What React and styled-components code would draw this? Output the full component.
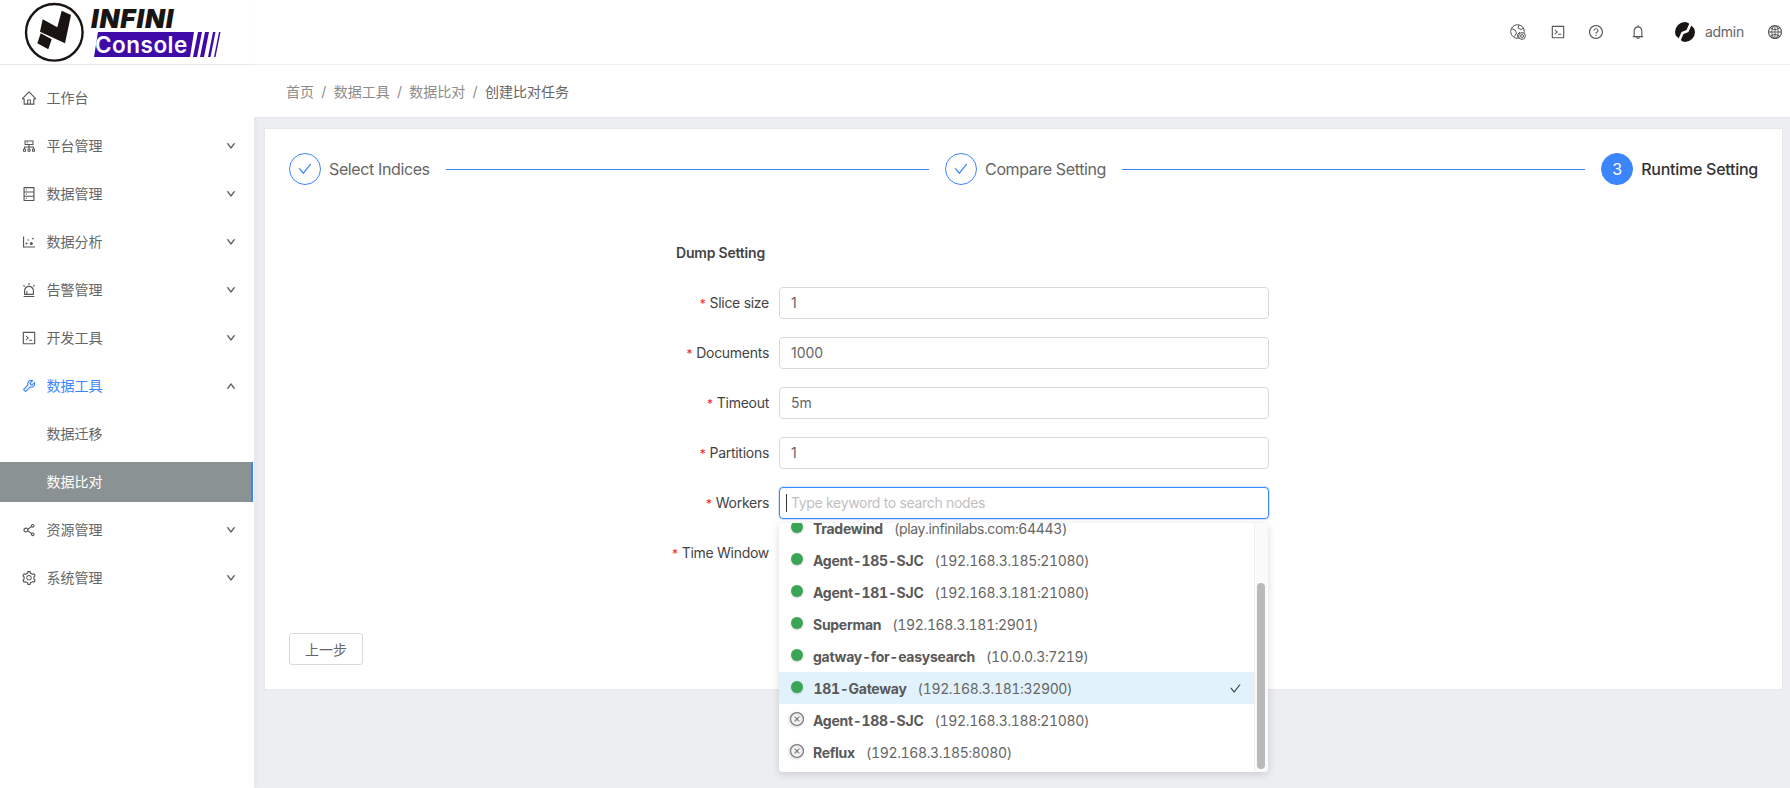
import React from "react";
import styled, { createGlobalStyle } from "styled-components";
import {
  AiOutlineHome, AiOutlineCluster, AiOutlineDatabase, AiOutlineDotChart, AiOutlineAlert,
  AiOutlineCode, AiOutlineTool, AiOutlineShareAlt, AiOutlineSetting, AiOutlineDown, AiOutlineUp,
  AiOutlineQuestionCircle, AiOutlineBell, AiOutlineGlobal, AiOutlineCheck, AiOutlineCloseCircle,
} from "react-icons/ai";

const Global = createGlobalStyle`
  html, body { margin: 0; padding: 0; height: 100%; overflow: hidden; }
  body { font-family: Inter, "Noto Sans CJK SC", sans-serif; font-size: 14px; color: #666; background: #eceef2; }
  * { box-sizing: border-box; }
`;

const Shell = styled.div`display: flex; width: 1790px; height: 788px; background: #eceef2;`;
const Sidebar = styled.aside`width: 254px; flex: none; background: #fff; display: flex; flex-direction: column; box-shadow: 2px 0 6px rgba(0,21,41,.04);`;
const LogoBar = styled.div`height: 65px; flex: none; border-bottom: 1px solid #e8e8e8; padding-left: 24px; display: flex; align-items: flex-start;`;
const Menu = styled.nav`display: flex; flex-direction: column; gap: 8px; padding-top: 13px;`;
const MenuItem = styled.div`
  height: 40px; display: flex; align-items: center; padding: 0 17px 0 21px; position: relative;
  color: ${p => p.$open ? "#3b86ff" : p.$selected ? "#fff" : "#666"};
  background: ${p => p.$selected ? "#8b9293" : "transparent"};
  border-right: ${p => p.$selected ? "2px solid #3b86ff" : "0"};
  margin-right: 1px;
  padding-left: ${p => p.$sub ? "46.5px" : "21px"};
`;
const MenuIcon = styled.span`width: 16px; margin-right: 9.5px; display: flex; font-size: 16px; color: ${p => p.$open ? "#3b86ff" : "#555"};`;
const MenuLabel = styled.span`flex: 1; font-size: 14px; line-height: 22px;`;
const Arrow = styled.span`display: flex; font-size: 10px; svg { color: #555; stroke: #555; stroke-width: 70px; }`;

const Main = styled.div`flex: 1; min-width: 0; display: flex; flex-direction: column;`;
const Header = styled.header`height: 65px; flex: none; background: #fff; border-bottom: 1px solid #f0f0f0; display: flex; align-items: center; justify-content: flex-end; padding-right: 7px; box-shadow: 0 1px 3px rgba(0,21,41,.03);`;
const HeaderIcon = styled.span`display: flex; font-size: 16px; color: #555; margin-left: ${p => p.$gap}px;`;
const Avatar = styled.span`display: flex; margin-left: 29px;`;
const UserName = styled.span`margin-left: 10px; font-size: 14px; color: #666; line-height: 20px; letter-spacing: -.25px;`;
const Crumbs = styled.div`height: 53px; flex: none; background: #fff; border-bottom: 1px solid #e6e8ec; display: flex; align-items: center; padding-left: 32px; font-size: 14px; color: #8c8c8c;`;
const Sep = styled.span`margin: 0 7.3px; color: #8c8c8c;`;
const Current = styled.span`color: #666;`;
const Content = styled.main`padding: 10px 7px 0 10px;`;
const Card = styled.section`height: 562px; background: #fff; border: 1px solid #e8e8e8; padding: 24px 24px 0; display: flex; flex-direction: column;`;
const Steps = styled.div`display: flex; height: 32px;`;
const Step = styled.div`display: flex; align-items: center; flex: ${p => p.$last ? "none" : "1"};`;
const StepDot = styled.span`width: 32px; height: 32px; flex: none; border-radius: 50%; display: flex; align-items: center; justify-content: center; font-size: 16px;
  border: 1px solid #3b86ff; color: ${p => p.$active ? "#fff" : "#3b86ff"}; background: ${p => p.$active ? "#3b86ff" : "#fff"};`;
const StepTitle = styled.span`margin-left: 8px; font-size: 16px; line-height: 24px; letter-spacing: ${p => p.$active ? "-.26px" : "-.38px"}; font-weight: ${p => p.$active ? 500 : 400}; color: ${p => p.$active ? "#333" : "#666"};`;
const StepLine = styled.span`flex: 1; height: 1px; background: #3f84e8; margin: 0 16px;`;

const Form = styled.div`margin: 57px 0 0 377px; display: flex; flex-direction: column;`;
const SectionTitle = styled.div`margin-left: 10px; height: 22px; line-height: 22px; font-weight: 600; font-size: 14px; letter-spacing: -.2px; color: #444; margin-bottom: 23px;`;
const Row = styled.div`display: flex; height: 32px; margin-bottom: 18px; position: relative;`;
const Label = styled.label`width: 103px; flex: none; text-align: right; line-height: 32px; font-size: 14px; letter-spacing: -.28px; color: #444; margin-right: 10px; white-space: nowrap;`;
const Star = styled.span`color: #f5222d; margin-right: 4px; font-size: 12px;`;
const InputBox = styled.div`width: 490px; height: 32px; border: 1px solid ${p => p.$focus ? "#3b86ff" : "#d9d9d9"}; border-radius: 4px; padding: 0 11px; line-height: 30px; font-size: 14px; color: #666; display: flex; align-items: center; background: #fff;
  box-shadow: ${p => p.$focus ? "0 0 0 1px rgba(59,134,255,.2)" : "none"};`;
const Caret = styled.span`width: 1px; height: 18px; background: #333; margin: 0 4px 0 -5px; flex: none;`;
const Placeholder = styled.span`color: #bfbfbf; letter-spacing: -.33px;`;
const Dropdown = styled.div`position: absolute; left: 113px; top: 36px; width: 489px; height: 249px; background: #fff; border-radius: 4px; box-shadow: 0 2px 8px rgba(0,0,0,.15); overflow: hidden; z-index: 5; display: flex;`;
const List = styled.div`flex: 1; margin-top: -11px;`;
const Option = styled.div`height: 32px; display: flex; align-items: center; padding-left: 12px; padding-right: 12px; color: #666; font-variant-numeric: tabular-nums; background: ${p => p.$selected ? "#e1f2fd" : "#fff"};`;
const Dot = styled.span`width: 12px; height: 12px; border-radius: 50%; background: #3aa655; flex: none; margin: -2px 10px 0 0; box-shadow: 0 1px 2px rgba(0,0,0,.2);`;
const Off = styled.span`width: 12px; display: flex; flex: none; font-size: 16px; margin: -2px 10px 0 0; color: #777; justify-content: center; svg { flex: none; filter: drop-shadow(-1px 1px 1px rgba(0,0,0,.25)); }`;
const NodeName = styled.b`font-weight: 700; font-size: 14px; letter-spacing: -.28px; color: #595959; margin-right: 11px; margin-left: ${p => p.$nudge ? 0.5 : 0}px;`;
const NodeAddr = styled.span`color: #666; flex: 1; font-size: 14px; letter-spacing: -.36px;`;
const Tick = styled.span`display: flex; font-size: 13px; color: #333;`;
const Track = styled.div`width: 14px; flex: none; border-left: 1px solid #eee; padding: 60px 3px 2px 2px; background: #fafafa;`;
const Thumb = styled.div`width: 8px; height: 186px; border-radius: 4px; background: #b9b9b9;`;
const Footer = styled.div`margin-top: auto; padding-bottom: 24px;`;
const Button = styled.button`width: 74px; height: 32px; border: 1px solid #d9d9d9; border-radius: 3px; background: #fff; font-family: inherit; font-size: 14px; color: #666; padding: 0;`;

const Logo = () => (
  <svg width="200" height="64" viewBox="0 0 200 64">
    <circle cx="30.3" cy="32.3" r="28.3" fill="#fff" stroke="#1a1512" strokeWidth="2.4" />
    <path d="M18.7 19.3 L33.3 27.3 L37.7 10.7 L47 15 L41 43.3 L16 31.7 Z M16.7 33.3 L27.7 39.3 L24.3 49.3 L13.3 43.3 Z" fill="#1a1512" />
    <text x="67" y="28" fontFamily="Inter" fontWeight="900" fontStyle="italic" fontSize="26" letterSpacing=".9" fill="#1a1512">INFINI</text>
    <path d="M74 32 H170 L166 57 H70 Z" fill="#3f0ba8" />
    <text x="71" y="53" fontFamily="Inter" fontWeight="600" fontSize="22.5" fill="#fff" letterSpacing=".5">Console</text>
    <path d="M174 32 H178 L173 57 H169 Z M181 32 H185 L180 57 H176 Z M189 32 H191.5 L186.5 57 H184 Z M195 32 H196.5 L191.5 57 H190 Z" fill="#3f0ba8" />
  </svg>
);

const Mark = () => (
  <svg width="20" height="20" viewBox="0 0 20 20">
    <circle cx="10" cy="10" r="10" fill="#1a1512" />
    <path d="M16 1 L12.5 9 L7.5 11 L4 19" fill="none" stroke="#fff" strokeWidth="2.6" />
    <path d="M12 0 H20 V7 Z M0 13 L8 20 H0 Z" fill="#fff" opacity=".9" />
  </svg>
);

const EarthLock = () => (
  <svg width="16" height="16" viewBox="0 0 16 16" fill="none" stroke="#555" strokeWidth="1">
    <circle cx="7.5" cy="7.5" r="6.8" />
    <path d="M1.5 4.5 L5 6 L6.5 9 L4.5 12.5 M9 1 L8 4 L11 5.5 L14 4 M8 14 L7.5 10.5 L10 8" />
    <circle cx="12" cy="12" r="3.4" fill="#fff" />
    <circle cx="12" cy="12" r="1.5" />
  </svg>
);

const menu = [
  [AiOutlineHome, "工作台"],
  [AiOutlineCluster, "平台管理", "down"],
  [AiOutlineDatabase, "数据管理", "down"],
  [AiOutlineDotChart, "数据分析", "down"],
  [AiOutlineAlert, "告警管理", "down"],
  [AiOutlineCode, "开发工具", "down"],
  [AiOutlineTool, "数据工具", "up"],
];
const tail = [
  [AiOutlineShareAlt, "资源管理", "down"],
  [AiOutlineSetting, "系统管理", "down"],
];

const nodes = [
  ["Tradewind", "(play.infinilabs.com:64443)", true],
  ["Agent-185-SJC", "(192.168.3.185:21080)", true],
  ["Agent-181-SJC", "(192.168.3.181:21080)", true],
  ["Superman", "(192.168.3.181:2901)", true],
  ["gatway-for-easysearch", "(10.0.0.3:7219)", true],
  ["181-Gateway", "(192.168.3.181:32900)", true, true],
  ["Agent-188-SJC", "(192.168.3.188:21080)", false],
  ["Reflux", "(192.168.3.185:8080)", false],
];

const fields = [["Slice size", "1"], ["Documents", "1000"], ["Timeout", "5m"], ["Partitions", "1"]];

function Item({ icon: Icon, label, arrow }) {
  const open = arrow === "up";
  return (
    <MenuItem $open={open}>
      <MenuIcon $open={open}><Icon /></MenuIcon>
      <MenuLabel>{label}</MenuLabel>
      {arrow && <Arrow>{open ? <AiOutlineUp /> : <AiOutlineDown />}</Arrow>}
    </MenuItem>
  );
}

export default function App() {
  return (
    <Shell>
      <Global />
      <Sidebar>
        <LogoBar><Logo /></LogoBar>
        <Menu>
          {menu.map(([I, l, a]) => <Item key={l} icon={I} label={l} arrow={a} />)}
          <MenuItem $sub><MenuLabel>数据迁移</MenuLabel></MenuItem>
          <MenuItem $sub $selected><MenuLabel>数据比对</MenuLabel></MenuItem>
          {tail.map(([I, l, a]) => <Item key={l} icon={I} label={l} arrow={a} />)}
        </Menu>
      </Sidebar>
      <Main>
        <Header>
          <HeaderIcon><EarthLock /></HeaderIcon>
          <HeaderIcon $gap={24}><AiOutlineCode /></HeaderIcon>
          <HeaderIcon $gap={22}><AiOutlineQuestionCircle /></HeaderIcon>
          <HeaderIcon $gap={26}><AiOutlineBell /></HeaderIcon>
          <Avatar><Mark /></Avatar>
          <UserName>admin</UserName>
          <HeaderIcon $gap={23}><AiOutlineGlobal /></HeaderIcon>
        </Header>
        <Crumbs>
          首页<Sep>/</Sep>数据工具<Sep>/</Sep>数据比对<Sep>/</Sep><Current>创建比对任务</Current>
        </Crumbs>
        <Content>
          <Card>
            <Steps>
              <Step><StepDot><AiOutlineCheck /></StepDot><StepTitle>Select Indices</StepTitle><StepLine /></Step>
              <Step><StepDot><AiOutlineCheck /></StepDot><StepTitle>Compare Setting</StepTitle><StepLine /></Step>
              <Step $last><StepDot $active>3</StepDot><StepTitle $active>Runtime Setting</StepTitle></Step>
            </Steps>
            <Form>
              <SectionTitle>Dump Setting</SectionTitle>
              {fields.map(([l, v]) => (
                <Row key={l}><Label><Star>*</Star>{l}</Label><InputBox>{v}</InputBox></Row>
              ))}
              <Row>
                <Label><Star>*</Star>Workers</Label>
                <InputBox $focus><Caret /><Placeholder>Type keyword to search nodes</Placeholder></InputBox>
                <Dropdown>
                  <List>
                    {nodes.map(([n, a, on, sel]) => (
                      <Option key={n} $selected={sel}>
                        {on ? <Dot /> : <Off><AiOutlineCloseCircle /></Off>}
                        <NodeName $nudge={sel}>{n}</NodeName>
                        <NodeAddr>{a}</NodeAddr>
                        {sel && <Tick><AiOutlineCheck /></Tick>}
                      </Option>
                    ))}
                  </List>
                  <Track><Thumb /></Track>
                </Dropdown>
              </Row>
              <Row><Label><Star>*</Star>Time Window</Label></Row>
            </Form>
            <Footer><Button>上一步</Button></Footer>
          </Card>
        </Content>
      </Main>
    </Shell>
  );
}
